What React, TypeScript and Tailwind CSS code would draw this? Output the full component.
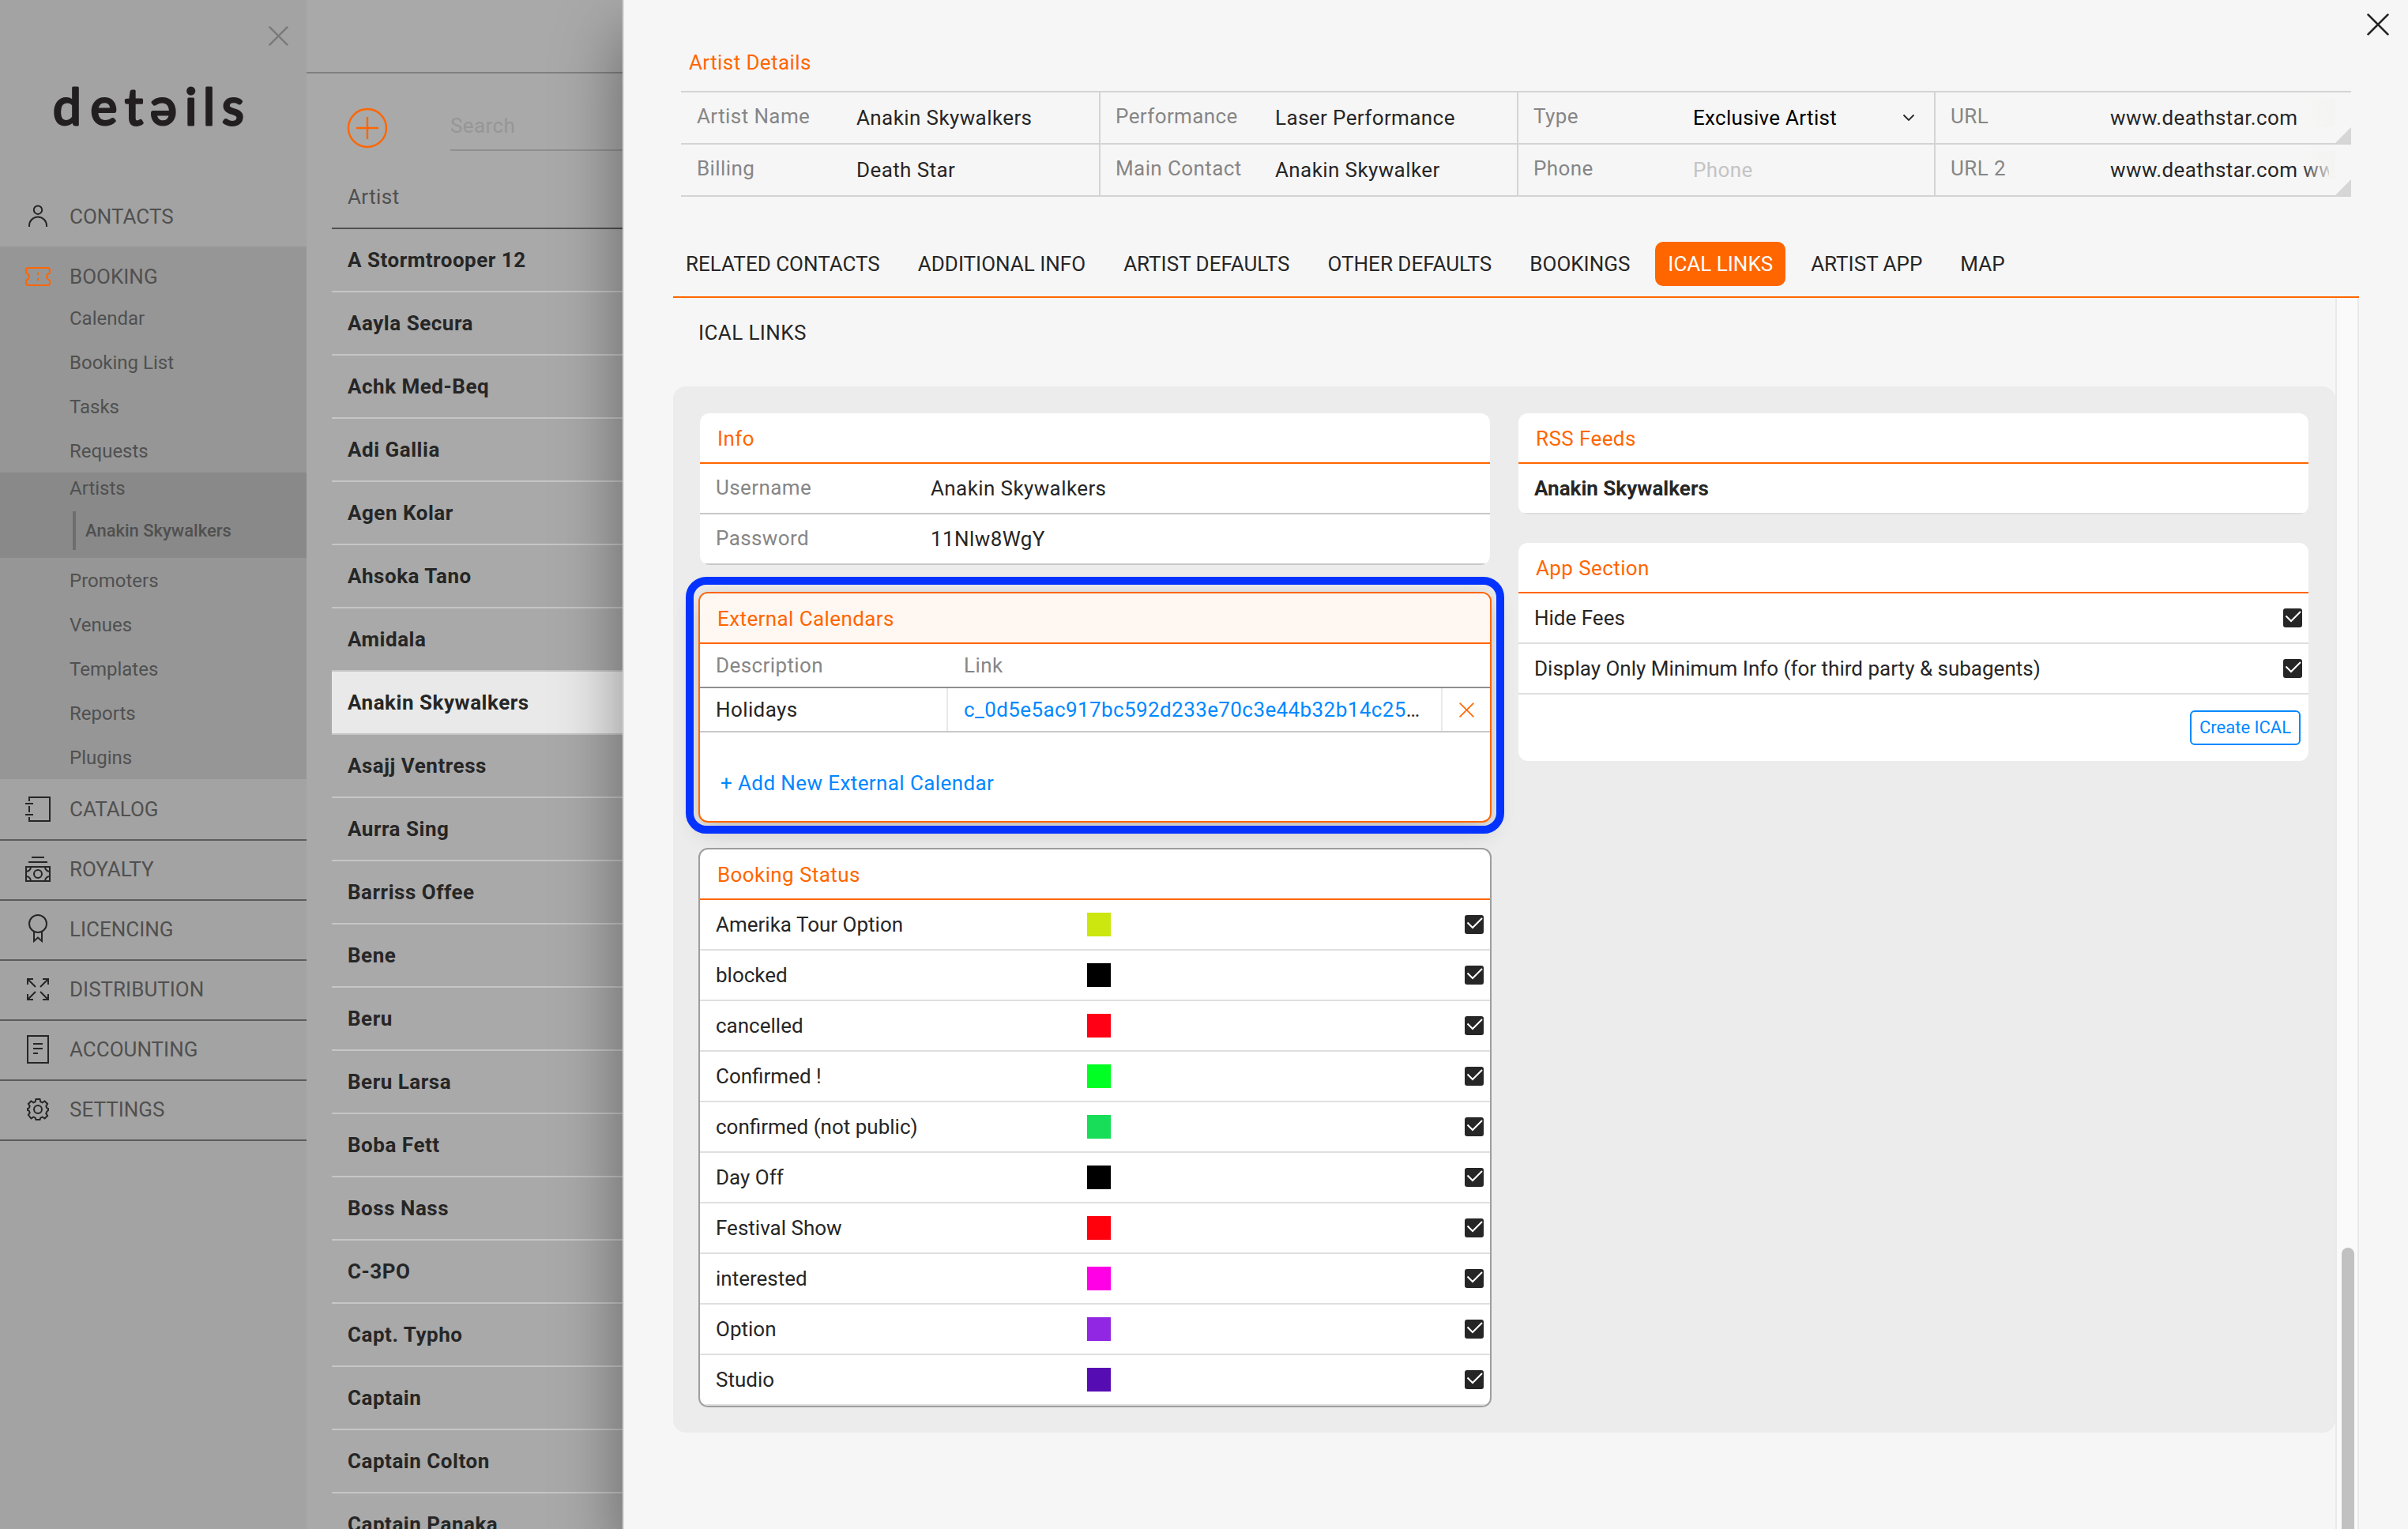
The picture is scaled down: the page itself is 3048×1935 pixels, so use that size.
import type { ReactNode } from "react";
import clsx from "clsx";

const BOOKING_TOP = ["Calendar", "Booking List", "Tasks", "Requests"];
const BOOKING_BOTTOM = ["Promoters", "Venues", "Templates", "Reports", "Plugins"];

const ARTISTS = [
  "A Stormtrooper 12",
  "Aayla Secura",
  "Achk Med-Beq",
  "Adi Gallia",
  "Agen Kolar",
  "Ahsoka Tano",
  "Amidala",
  "Anakin Skywalkers",
  "Asajj Ventress",
  "Aurra Sing",
  "Barriss Offee",
  "Bene",
  "Beru",
  "Beru Larsa",
  "Boba Fett",
  "Boss Nass",
  "C-3PO",
  "Capt. Typho",
  "Captain",
  "Captain Colton",
  "Captain Panaka",
];

const TABS = [
  "RELATED CONTACTS",
  "ADDITIONAL INFO",
  "ARTIST DEFAULTS",
  "OTHER DEFAULTS",
  "BOOKINGS",
  "ICAL LINKS",
  "ARTIST APP",
  "MAP",
];

const STATUSES = [
  { label: "Amerika Tour Option", color: "bg-[#cce60f]" },
  { label: "blocked", color: "bg-black" },
  { label: "cancelled", color: "bg-[#ff0015]" },
  { label: "Confirmed !", color: "bg-[#00ff22]" },
  { label: "confirmed (not public)", color: "bg-[#18dd58]" },
  { label: "Day Off", color: "bg-black" },
  { label: "Festival Show", color: "bg-[#ff000d]" },
  { label: "interested", color: "bg-[#ff00e6]" },
  { label: "Option", color: "bg-[#9127e3]" },
  { label: "Studio", color: "bg-[#560cb3]" },
];

export default function App() {
  return (
    <div className="flex h-[1935px] w-[3048px] overflow-hidden bg-[#a9a9a9] font-['Roboto',sans-serif] text-[26px] leading-[30px] tracking-[0.4px] text-[#262626]">
      <Sidebar />
      <ArtistList />
      <DetailPanel />
    </div>
  );
}

function Sidebar() {
  return (
    <aside className="h-full w-[388px] shrink-0 bg-[#a3a3a3] tracking-normal text-[#505050]">
      <div className="flex h-[102px] justify-end pt-[33px] pr-[23px]">
        <Cross className="size-[25px] text-[#7a7a7a]" strokeWidth={2.5} />
      </div>
      <div className="h-[134px] pl-[60px]">
        <svg width="260" height="66" className="overflow-visible">
          <text
            x="7 54.5 98 130 174 197 221"
            y="56"
            fontFamily="Lato"
            fontSize="64"
            fill="#231f20"
            stroke="#231f20"
            strokeWidth="3"
            strokeLinejoin="round"
          >
            detəils
          </text>
        </svg>
      </div>

      <NavRow label="CONTACTS" icon={<PersonIcon />} className="h-[76px]" />

      <div className="bg-[#969696]">
        <NavRow label="BOOKING" icon={<TicketIcon />} className="h-[62px] pt-[14px]" />
        {BOOKING_TOP.map((item) => (
          <SubItem key={item} label={item} />
        ))}
        <div className="h-[108px] bg-[#898989] pl-[88px]">
          <p className="flex h-[40px] items-center text-[24px]">Artists</p>
          <p className="mt-[9px] ml-1 flex h-[49px] items-center border-l-4 border-[#6e6e6e] pl-3 text-[22px] font-medium">
            Anakin Skywalkers
          </p>
        </div>
        {BOOKING_BOTTOM.map((item) => (
          <SubItem key={item} label={item} />
        ))}
      </div>

      <NavRow label="CATALOG" icon={<CatalogIcon />} className="h-[78px] border-b-2 border-[#5c5c5c]" />
      <NavRow label="ROYALTY" icon={<RoyaltyIcon />} className="h-[76px] border-b-2 border-[#5c5c5c] pb-0.5" />
      <NavRow label="LICENCING" icon={<LicenceIcon />} className="h-[76px] border-b-2 border-[#5c5c5c] pb-0.5" />
      <NavRow label="DISTRIBUTION" icon={<DistributionIcon />} className="h-[76px] border-b-2 border-[#5c5c5c] pb-0.5" />
      <NavRow label="ACCOUNTING" icon={<AccountingIcon />} className="h-[76px] border-b-2 border-[#5c5c5c] pb-0.5" />
      <NavRow label="SETTINGS" icon={<GearIcon />} className="h-[76px] border-b-2 border-[#5c5c5c] pb-0.5" />
    </aside>
  );
}

function NavRow({ label, icon, className }: { label: string; icon: ReactNode; className: string }) {
  return (
    <div className={clsx("flex items-center gap-6 pl-8", className)}>
      {icon}
      <span>{label}</span>
    </div>
  );
}

function SubItem({ label }: { label: string }) {
  return <p className="flex h-[56px] items-center pt-px pl-[88px] text-[24px]">{label}</p>;
}

function ArtistList() {
  return (
    <section className="h-full w-[400px] shrink-0 overflow-hidden">
      <div className="h-[93px] border-b-2 border-[#808080]" />
      <div className="flex h-[98px] items-end justify-between pl-[51px]">
        <svg width="52" height="52" className="mb-[3px]" fill="none" stroke="#ff6600" strokeWidth="2.4">
          <circle cx="26" cy="26" r="24" />
          <path d="M12 26h28M26 12v28" />
        </svg>
        <div className="w-[218px] border-b-2 border-[#8f8f8f] pb-[15px] text-[#969696]">Search</div>
      </div>
      <div className="ml-8">
        <div className="flex h-[99px] items-center border-b-2 border-[#505050] pt-[19px] pl-5 text-[#505050]">
          <span>Artist</span>
        </div>
        {ARTISTS.map((name) => (
          <div
            key={name}
            className={clsx(
              "flex h-[80px] items-center border-b-2 border-[#c6c6c6] pl-5 font-bold tracking-[0.52px]",
              name === "Anakin Skywalkers" && "bg-[#e9e9e9]",
            )}
          >
            {name}
          </div>
        ))}
      </div>
    </section>
  );
}

function DetailPanel() {
  return (
    <main className="relative h-full flex-1 border-l-2 border-[#d9d9d9] bg-[#f6f6f6] shadow-[0_40px_80px_rgba(0,0,0,0.4)]">
      <div className="flex h-[115px] justify-between pl-[82px]">
        <h1 className="pt-16 text-[#ff6600]">Artist Details</h1>
        <Cross className="mt-[17px] mr-6 size-[28px]" strokeWidth={2.6} />
      </div>

      <div className="ml-[72px] grid w-[2114px] grid-cols-[529px_529px_528px_528px] border-t-2 border-[#d4d4d4]">
        <DetailCell label="Artist Name">Anakin Skywalkers</DetailCell>
        <DetailCell label="Performance">Laser Performance</DetailCell>
        <DetailCell label="Type">
          <span className="flex-1 tracking-[0.3px] text-black">Exclusive Artist</span>
          <svg width="16" height="10" className="mr-6" fill="none" stroke="#262626" strokeWidth="1.8">
            <path d="M1.5 1.5 8 8l6.5-6.5" />
          </svg>
        </DetailCell>
        <DetailCell label="URL" resizable>
          www.deathstar.com
        </DetailCell>
        <DetailCell label="Billing">Death Star</DetailCell>
        <DetailCell label="Main Contact">Anakin Skywalker</DetailCell>
        <DetailCell label="Phone">
          <span className="text-[#c4c4c4]">Phone</span>
        </DetailCell>
        <DetailCell label="URL 2" resizable>
          www.deathstar.com www
        </DetailCell>
      </div>

      <nav className="ml-[62px] flex h-[128px] w-[2134px] items-end gap-4 border-b-2 border-[#ff6600] pb-[13px] tracking-normal">
        {TABS.map((tab) => (
          <span
            key={tab}
            className={clsx(
              "flex h-[56px] items-center rounded-[10px] px-4",
              tab === "ICAL LINKS" && "bg-[#ff6600] text-white",
            )}
          >
            {tab}
          </span>
        ))}
      </nav>

      <div className="ml-[62px] flex h-[1558px] w-[2134px]">
        <div className="w-[2104px]">
          <h2 className="flex h-[88px] items-center pl-8">ICAL LINKS</h2>
          <IcalContent />
        </div>
        <div className="flex w-[30px] flex-col items-center justify-end border-x-2 border-[#e9e9e9] bg-[#fafafa] pl-0.5">
          <div className="h-[356px] w-4 rounded-t-full bg-[#c1c1c1]" />
        </div>
      </div>
    </main>
  );
}

function DetailCell({
  label,
  resizable,
  children,
}: {
  label: string;
  resizable?: boolean;
  children: ReactNode;
}) {
  return (
    <div className="relative flex h-[66px] border-b-2 border-[#d4d4d4] nth-[4n+1]:pl-px not-nth-[4n+1]:border-l-2">
      <div className="flex w-[221px] shrink-0 items-center pb-1 pl-[19px] text-[#868686]">{label}</div>
      <div className={clsx("flex flex-1 items-center overflow-hidden whitespace-nowrap", resizable && "mr-7")}>
        {children}
      </div>
      {resizable && (
        <>
          <div className="absolute top-2 right-5 h-9 w-11 bg-linear-to-r from-[#f4f4f2]/0 to-[#f4f4f2]" />
          <svg width="20" height="20" className="absolute right-0 bottom-0">
            <path d="M20 0v20H0z" fill="#d6d6d6" />
          </svg>
        </>
      )}
    </div>
  );
}

function IcalContent() {
  return (
    <div className="mt-6 flex gap-9 rounded-2xl bg-[#ececec] px-[34px] pt-[34px] pb-8">
      <div className="w-[1000px]">
        <Card title="Info">
          <InfoRow label="Username" value="Anakin Skywalkers" />
          <InfoRow label="Password" value="11Nlw8WgY" />
        </Card>
        <ExternalCalendars />
        <div className="-mx-0.5 mt-8 overflow-hidden rounded-xl border-2 border-[#9e9e9e] bg-white">
          <CardTitle>Booking Status</CardTitle>
          {STATUSES.map((status) => (
            <div
              key={status.label}
              className="flex h-16 items-center border-b-2 border-[#dfdfdf] pr-2 pl-5 tracking-normal"
            >
              <span className="w-[470px]">{status.label}</span>
              <span className={clsx("size-[30px]", status.color)} />
              <Checkbox />
            </div>
          ))}
        </div>
      </div>

      <div className="w-[1000px]">
        <Card title="RSS Feeds">
          <div className="flex h-16 items-center border-b-2 border-[#dfdfdf] pl-5 font-bold tracking-normal">
            Anakin Skywalkers
          </div>
        </Card>
        <div className="h-9" />
        <Card title="App Section">
          {["Hide Fees", "Display Only Minimum Info (for third party & subagents)"].map((option) => (
            <div
              key={option}
              className="flex h-16 items-center border-b-2 border-[#dfdfdf] pr-2 pl-5 tracking-normal"
            >
              {option}
              <Checkbox />
            </div>
          ))}
          <div className="flex h-[84px] justify-end pt-5 pr-[10px]">
            <button className="flex h-11 w-[140px] items-center justify-center rounded-md border-2 border-[#0088ff] text-[22px] tracking-normal text-[#0088ff]">
              Create ICAL
            </button>
          </div>
        </Card>
      </div>
    </div>
  );
}

function ExternalCalendars() {
  return (
    <div className="relative -mx-0.5 mt-[34px] rounded-xl border-2 border-[#ff6600] bg-white shadow-[0_10px_30px_rgba(0,0,0,0.2)]">
      <CardTitle className="rounded-t-[10px] bg-[#fff7f2]">External Calendars</CardTitle>
      <div className="flex h-14 items-center border-b-2 border-[#8f8f8f] pl-5 text-[#868686]">
        <span className="w-[314px]">Description</span>
        <span>Link</span>
      </div>
      <div className="flex h-14 border-b-2 border-[#c8c8c8]">
        <div className="flex w-[312px] items-center pl-5">Holidays</div>
        <div className="flex w-[628px] items-center border-x-2 border-[#e9e9e9] pl-5">
          <span className="text-[#0088ff]">c_0d5e5ac917bc592d233e70c3e44b32b14c25</span>…
        </div>
        <div className="flex flex-1 items-center justify-center">
          <Cross className="size-[19px] text-[#ff6600]" strokeWidth={2.2} />
        </div>
      </div>
      <p className="h-[112px] pt-[49px] pl-[26px] text-[#0088ff]">+ Add New External Calendar</p>
      {/* highlight frame drawn over the card and its shadow */}
      <div className="pointer-events-none absolute -top-[21px] -right-[18px] -bottom-[16px] -left-[18px] rounded-[26px] border-10 border-[#0433ff]" />
    </div>
  );
}

function Card({ title, children }: { title: string; children: ReactNode }) {
  return (
    <div className="overflow-hidden rounded-xl bg-white">
      <CardTitle>{title}</CardTitle>
      {children}
    </div>
  );
}

function CardTitle({ children, className }: { children: ReactNode; className?: string }) {
  return (
    <h3 className={clsx("flex h-16 items-center border-b-2 border-[#ff6600] pt-0.5 pl-[22px] text-[#ff6600]", className)}>
      {children}
    </h3>
  );
}

function InfoRow({ label, value }: { label: string; value: string }) {
  return (
    <div className="flex h-16 items-center border-b-2 border-[#c8c8c8] pl-5">
      <span className="w-[272px] pb-0.5 text-[#868686]">{label}</span>
      <span>{value}</span>
    </div>
  );
}

function Checkbox() {
  return (
    <svg width="24" height="24" className="ml-auto" fill="none">
      <rect width="24" height="24" rx="3" fill="#262626" />
      <path d="m3.5 9.5 6.5 6.5L22 4" stroke="#fff" strokeWidth="2" />
    </svg>
  );
}

function Cross({ className, strokeWidth }: { className: string; strokeWidth: number }) {
  return (
    <svg
      viewBox="0 0 26 26"
      className={className}
      fill="none"
      stroke="currentColor"
      strokeWidth={strokeWidth}
      strokeLinecap="round"
    >
      <path d="m1.5 1.5 23 23M24.5 1.5l-23 23" />
    </svg>
  );
}

function NavIcon({ children, color = "#262626" }: { children: ReactNode; color?: string }) {
  return (
    <svg width="32" height="40" fill="none" stroke={color} strokeWidth="2" className="shrink-0">
      {children}
    </svg>
  );
}

function PersonIcon() {
  return (
    <NavIcon>
      <circle cx="16" cy="11.7" r="5.2" />
      <path d="M5 33v-1.5a11 11 0 0 1 22 0V33" />
    </NavIcon>
  );
}

function TicketIcon() {
  return (
    <NavIcon color="#ff6600">
      <path d="M4 9h24a3 3 0 0 1 3 3v3.2c-2.2.8-3.8 2.6-3.8 4.8s1.6 4 3.8 4.8V28a3 3 0 0 1-3 3H4a3 3 0 0 1-3-3v-3.2c2.2-.8 3.8-2.6 3.8-4.8S3.200 16 1 15.2V12a3 3 0 0 1 3-3z" />
      <path d="M16 14.5V18M16 22v3.5" />
    </NavIcon>
  );
}

function CatalogIcon() {
  return (
    <NavIcon>
      <path d="M5 10V5h26v30H5v-5M5 16v8M0 13h10M0 27h10" />
    </NavIcon>
  );
}

function RoyaltyIcon() {
  return (
    <NavIcon>
      <path d="M8 5h16M4 11h24M1 17h30v18H1z" />
      <circle cx="16" cy="26" r="5" />
      <path d="M1 23a6 6 0 0 0 6-6M31 23a6 6 0 0 1-6-6M1 29a6 6 0 0 1 6 6M31 29a6 6 0 0 0-6 6" />
    </NavIcon>
  );
}

function LicenceIcon() {
  return (
    <NavIcon>
      <circle cx="16" cy="13" r="11" />
      <path d="M11 23v12l5-4.5 5 4.5V23" />
    </NavIcon>
  );
}

function DistributionIcon() {
  return (
    <NavIcon>
      <path d="M3 14V7h7M3.5 7.5 13 17M22 7h7v7M28.5 7.5 19 17M29 26v7h-7M28.5 32.5 19 23M10 33H3v-7M3.5 32.5 13 23" />
    </NavIcon>
  );
}

function AccountingIcon() {
  return (
    <NavIcon>
      <path d="M3 3h26v34H3zM10 13h12M10 19h12M10 25h6" />
    </NavIcon>
  );
}

function GearIcon() {
  return (
    <NavIcon>
      <path d="M13.5 7h5l.8 3.3 2.4 1 2.900-1.8 3.500 3.500-1.800 2.900 1 2.400 1.700 .7v2l-1.700 1.700-1 2.400 1.800 2.900-3.500 3.500-2.900-1.800-2.400 1-.8 2.300h-5l-.8-2.300-2.400-1-2.900 1.800L3.900 27l1.800-2.900-1-2.400L3 21v-2l1.700-.7 1-2.400L3.900 13l3.500-3.500 2.900 1.800 2.400-1z" />
      <circle cx="16" cy="20" r="5" />
    </NavIcon>
  );
}
